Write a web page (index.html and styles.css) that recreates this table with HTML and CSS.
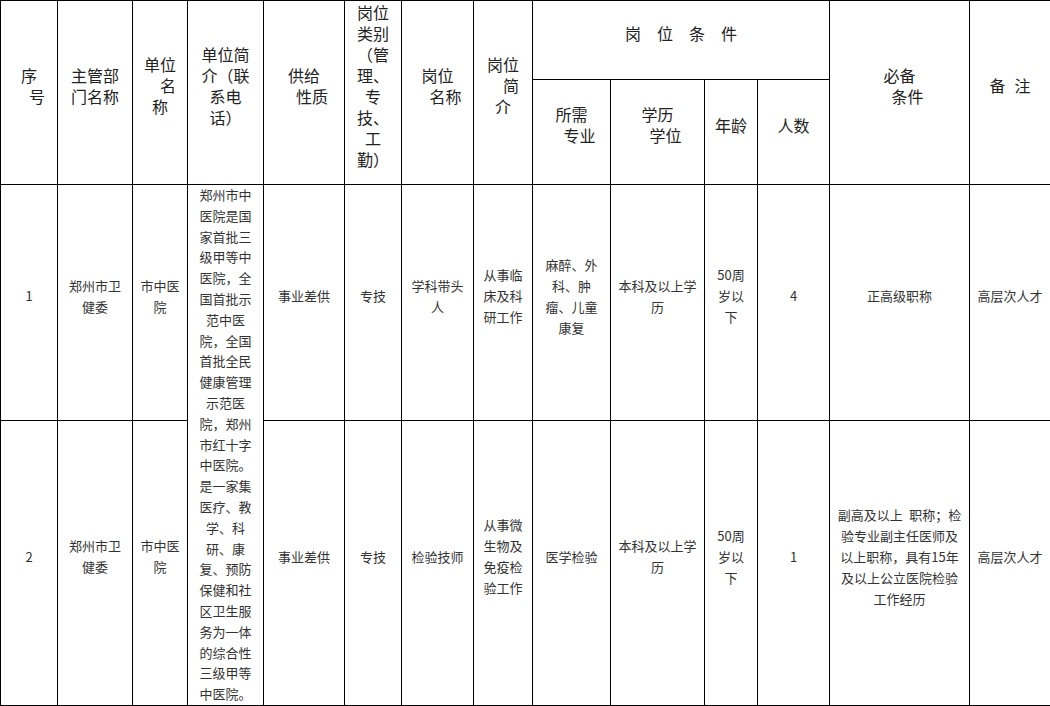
FILE: index.html
```html
<!DOCTYPE html>
<html lang="zh-CN">
<head>
<meta charset="utf-8">
<title>岗位表</title>
<link rel="stylesheet" href="styles.css">
</head>
<body>
<table class="sheet">
  <colgroup>
    <col class="c1"><col class="c2"><col class="c3"><col class="c4"><col class="c5"><col class="c6"><col class="c7">
    <col class="c8"><col class="c9"><col class="c10"><col class="c11"><col class="c12"><col class="c13"><col class="c14">
  </colgroup>
  <thead>
    <tr class="hr1">
      <th rowspan="2">序<br>&#12288;号</th>
      <th rowspan="2">主管部<br>门名称</th>
      <th rowspan="2">单位<br>&#12288;名<br>称</th>
      <th rowspan="2">单位简<br>介（联<br>系电<br>话）</th>
      <th rowspan="2">供给<br>&#12288;性质</th>
      <th rowspan="2">岗位<br>类别<br>（管<br>理、<br>专<br>技、<br>工<br>勤）</th>
      <th rowspan="2">岗位<br>&#12288;名称</th>
      <th rowspan="2">岗位<br>&#12288;简<br>介</th>
      <th colspan="4">岗&#12288;位&#12288;条&#12288;件</th>
      <th rowspan="2">必备<br>&#12288;条件</th>
      <th rowspan="2">备<span class="gap"></span>注</th>
    </tr>
    <tr class="hr2">
      <th>所需<br>&#12288;专业</th>
      <th>学历<br>&#12288;学位</th>
      <th>年龄</th>
      <th>人数</th>
    </tr>
  </thead>
  <tbody>
    <tr class="r1">
      <td>1</td>
      <td>郑州市卫<br>健委</td>
      <td>市中医<br>院</td>
      <td rowspan="2" class="intro">郑州市中<br>医院是国<br>家首批三<br>级甲等中<br>医院，全<br>国首批示<br>范中医<br>院，全国<br>首批全民<br>健康管理<br>示范医<br>院，郑州<br>市红十字<br>中医院。<br>是一家集<br>医疗、教<br>学、科<br>研、康<br>复、预防<br>保健和社<br>区卫生服<br>务为一体<br>的综合性<br>三级甲等<br>中医院。</td>
      <td>事业差供</td>
      <td>专技</td>
      <td>学科带头<br>人</td>
      <td>从事临<br>床及科<br>研工作</td>
      <td>麻醉、外<br>科、肿<br>瘤、儿童<br>康复</td>
      <td>本科及以上学<br>历</td>
      <td>50周<br>岁以<br>下</td>
      <td>4</td>
      <td>正高级职称</td>
      <td>高层次人才</td>
    </tr>
    <tr class="r2">
      <td>2</td>
      <td>郑州市卫<br>健委</td>
      <td>市中医<br>院</td>
      <td>事业差供</td>
      <td>专技</td>
      <td>检验技师</td>
      <td>从事微<br>生物及<br>免疫检<br>验工作</td>
      <td>医学检验</td>
      <td>本科及以上学<br>历</td>
      <td>50周<br>岁以<br>下</td>
      <td>1</td>
      <td>副高及以上&ensp;职称；检<br>验专业副主任医师及<br>以上职称，具有15年<br>及以上公立医院检验<br>工作经历</td>
      <td>高层次人才</td>
    </tr>
  </tbody>
</table>
</body>
</html>
```

FILE: styles.css
```css
html, body {
  margin: 0;
  padding: 0;
  background: #fff;
}

.sheet {
  border-collapse: collapse;
  table-layout: fixed;
  width: 1050px;
  font-family: "Noto Sans CJK SC", "Noto Sans", sans-serif;
}

.sheet th,
.sheet td {
  border: 1px solid #000;
  padding: 0 0 14px 0;
  text-align: center;
  vertical-align: middle;
  white-space: nowrap;
  overflow: hidden;
}

.sheet th {
  font-size: 16px;
  line-height: 21px;
  font-weight: normal;
  color: #222;
}

.sheet td {
  font-size: 13px;
  line-height: 21px;
  color: #333;
}

.sheet td.intro {
  padding: 0;
  vertical-align: top;
  line-height: 20.8px;
}

.gap {
  display: inline-block;
  width: 9px;
}

.c1 { width: 57px; }
.c2 { width: 75px; }
.c3 { width: 55px; }
.c4 { width: 76px; }
.c5 { width: 81px; }
.c6 { width: 57px; }
.c7 { width: 72px; }
.c8 { width: 59px; }
.c9 { width: 78px; }
.c10 { width: 94px; }
.c11 { width: 53px; }
.c12 { width: 72px; }
.c13 { width: 140px; }
.c14 { width: 81px; }

.hr1 { height: 79px; }
.hr2 { height: 105px; }
.r1 { height: 236px; }
.r2 { height: 285px; }
```
